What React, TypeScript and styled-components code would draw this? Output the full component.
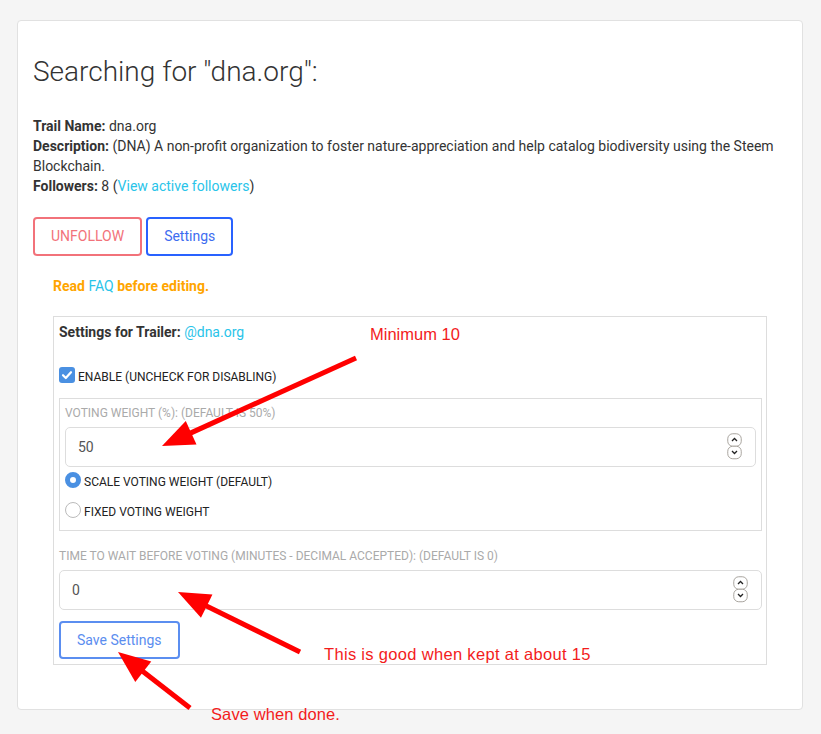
import React from 'react';
import styled, { createGlobalStyle } from 'styled-components';

const Global = createGlobalStyle`
  html, body { margin: 0; padding: 0; background: #f5f5f5; }
  body {
    font-family: Roboto, "Liberation Sans", Arial, sans-serif;
    color: #333;
    width: 821px;
    height: 734px;
    overflow: hidden;
  }
  * { box-sizing: border-box; }
`;

const Page = styled.div`
  position: relative;
  width: 821px;
  height: 734px;
  padding: 20px 18px 0 17px;
`;

const Card = styled.div`
  background: #fff;
  border: 1px solid #e1e1e1;
  border-radius: 4px;
  height: 690px;
  padding: 0 15px;
`;

const Title = styled.h3`
  margin: 34px 0 27px;
  font-size: 28px;
  line-height: 33.6px;
  font-weight: 300;
  color: #333;
`;

const Info = styled.div`
  font-size: 14px;
  line-height: 20px;
  color: #333;
`;

const Strong = styled.b`
  font-weight: 700;
`;

const Link = styled.a`
  color: #29c4e9;
  text-decoration: none;
  font-weight: 400;
`;

const ButtonRow = styled.div`
  margin-top: 21px;
  display: flex;
  gap: 4px;
`;

const OutlineButton = styled.button<{ $tone: 'danger' | 'primary' | 'soft' }>`
  height: ${(p) => (p.$tone === 'soft' ? 38 : 39)}px;
  padding: 0 16px;
  background: #fff;
  border: 2px solid
    ${(p) => (p.$tone === 'danger' ? '#f2727a' : p.$tone === 'primary' ? '#2962ff' : '#5b8ef0')};
  color: ${(p) => (p.$tone === 'danger' ? '#f2727a' : p.$tone === 'primary' ? '#3d6cf0' : '#5b8def')};
  border-radius: 4px;
  font-family: Roboto, "Liberation Sans", sans-serif;
  font-size: 14px;
  cursor: pointer;
`;

const Notice = styled.div`
  margin-top: 20px;
  padding-left: 20px;
  font-size: 14px;
  line-height: 20px;
  font-weight: 700;
  color: #ffa500;
`;

const SettingsBox = styled.div`
  margin: 20px 20px 0;
  border: 1px solid #ddd;
  padding: 5px 4px 5px 5px;
`;

const BoxHeading = styled.div`
  font-size: 14px;
  line-height: 20px;
`;

const CheckRow = styled.label`
  margin-top: 25px;
  display: flex;
  align-items: center;
  gap: 3px;
  height: 20px;
  font-size: 12px;
  color: #222;
`;

const CheckMark = styled.span`
  width: 16px;
  height: 16px;
  border-radius: 3px;
  background: #4a90e2;
  display: inline-flex;
  align-items: center;
  justify-content: center;
  margin-top: -4px;
`;

const Fieldset = styled.div`
  margin-top: 11px;
  border: 1px solid #ddd;
  padding: 5px 5px 6px 5px;
`;

const FieldLabel = styled.div<{ $gap?: number }>`
  font-size: 12px;
  line-height: 18px;
  color: #aaa;
  margin-top: ${(p) => p.$gap ?? 0}px;
`;

const InputBox = styled.div<{ $h: number }>`
  margin-top: 5px;
  height: ${(p) => p.$h}px;
  border: 1px solid #ddd;
  border-radius: 5px;
  display: flex;
  align-items: center;
  padding: 0 13px 0 12px;
`;

const NumberInput = styled.input`
  flex: 1;
  border: none;
  outline: none;
  font-family: Roboto, "Liberation Sans", sans-serif;
  font-size: 14px;
  color: #555;
  padding: 0;
  background: transparent;
`;

const RadioRow = styled.label<{ $first?: boolean }>`
  margin-top: ${(p) => (p.$first ? 3 : 6)}px;
  height: 24px;
  display: flex;
  align-items: center;
  gap: 3px;
  font-size: 12px;
  color: #222;
`;

const RadioDot = styled.span<{ $checked?: boolean }>`
  width: 16px;
  height: 16px;
  border-radius: 50%;
  margin-top: -4px;
  background: #fff;
  border: ${(p) => (p.$checked ? '5px solid #4a90e2' : '1px solid #bbb')};
`;

const SaveRow = styled.div`
  margin-top: 11px;
`;

const Overlay = styled.svg`
  position: absolute;
  left: 0;
  top: 0;
  pointer-events: none;
`;

const Note = styled.div<{ $x: number; $y: number; $spacing?: number }>`
  position: absolute;
  left: ${(p) => p.$x}px;
  top: ${(p) => p.$y}px;
  font-family: "Liberation Sans", Arial, sans-serif;
  font-size: 16.5px;
  line-height: 20px;
  letter-spacing: ${(p) => p.$spacing ?? 0}px;
  color: #f31c1c;
  white-space: nowrap;
`;

const Spinner = () => (
  <svg width="15" height="27" viewBox="0 0 15 27">
    <rect x="0.75" y="0.75" width="13.5" height="12.5" rx="5" fill="#fff" stroke="#a9a59f" strokeWidth="1" />
    <rect x="0.75" y="13.25" width="13.5" height="12.5" rx="5" fill="#fff" stroke="#a9a59f" strokeWidth="1" />
    <path d="M5 8 L7.5 5.5 L10 8" fill="none" stroke="#222" strokeWidth="1.3" />
    <path d="M5 18 L7.5 20.5 L10 18" fill="none" stroke="#222" strokeWidth="1.3" />
  </svg>
);

type ArrowProps = { x1: number; y1: number; x2: number; y2: number };
const Arrow = ({ x1, y1, x2, y2 }: ArrowProps) => {
  const dx = x2 - x1;
  const dy = y2 - y1;
  const len = Math.hypot(dx, dy);
  const ux = dx / len;
  const uy = dy / len;
  const hl = 32;
  const hw = 13;
  const bx = x2 - ux * hl;
  const by = y2 - uy * hl;
  const px = -uy;
  const py = ux;
  const pts = `${x2},${y2} ${bx + px * hw},${by + py * hw} ${bx - px * hw},${by - py * hw}`;
  return (
    <g>
      <line x1={x1} y1={y1} x2={bx + ux * 2} y2={by + uy * 2} stroke="#ff0000" strokeWidth="5" />
      <polygon points={pts} fill="#ff0000" />
    </g>
  );
};

export default function App() {
  return (
    <Page>
      <Global />
      <Card>
        <Title>Searching for "dna.org":</Title>
        <Info>
          <Strong>Trail Name:</Strong> dna.org
          <br />
          <Strong>Description:</Strong> (DNA) A non-profit organization to foster nature-appreciation and help catalog
          biodiversity using the Steem Blockchain.
          <br />
          <Strong>Followers:</Strong> 8 (<Link href="#">View active followers</Link>)
        </Info>
        <ButtonRow>
          <OutlineButton $tone="danger">UNFOLLOW</OutlineButton>
          <OutlineButton $tone="primary">Settings</OutlineButton>
        </ButtonRow>
        <Notice>
          Read <Link href="#">FAQ</Link> before editing.
        </Notice>
        <SettingsBox>
          <BoxHeading>
            <Strong>Settings for Trailer:</Strong> <Link href="#">@dna.org</Link>
          </BoxHeading>
          <CheckRow>
            <CheckMark>
              <svg width="12" height="12" viewBox="0 0 12 12">
                <path d="M2 6.2 L4.8 9 L10 3.2" fill="none" stroke="#fff" strokeWidth="2.2" strokeLinecap="round" strokeLinejoin="round" />
              </svg>
            </CheckMark>
            ENABLE (UNCHECK FOR DISABLING)
          </CheckRow>
          <Fieldset>
            <FieldLabel>VOTING WEIGHT (%): (DEFAULT IS 50%)</FieldLabel>
            <InputBox $h={40}>
              <NumberInput defaultValue="50" />
              <Spinner />
            </InputBox>
            <RadioRow $first>
              <RadioDot $checked />
              SCALE VOTING WEIGHT (DEFAULT)
            </RadioRow>
            <RadioRow>
              <RadioDot />
              FIXED VOTING WEIGHT
            </RadioRow>
          </Fieldset>
          <FieldLabel $gap={16}>TIME TO WAIT BEFORE VOTING (MINUTES - DECIMAL ACCEPTED): (DEFAULT IS 0)</FieldLabel>
          <InputBox $h={40}>
            <NumberInput defaultValue="0" />
            <Spinner />
          </InputBox>
          <SaveRow>
            <OutlineButton $tone="soft">Save Settings</OutlineButton>
          </SaveRow>
        </SettingsBox>
      </Card>
      <Overlay width="821" height="734" viewBox="0 0 821 734">
        <Arrow x1={356} y1={358} x2={162} y2={446} />
        <Arrow x1={300} y1={652} x2={178} y2={592} />
        <Arrow x1={190} y1={708} x2={118} y2={652} />
      </Overlay>
      <Note $x={370} $y={324}>Minimum 10</Note>
      <Note $x={324} $y={644} $spacing={0.32}>
        This is good when kept at about 15
      </Note>
      <Note $x={211} $y={704} $spacing={0.1}>
        Save when done.
      </Note>
    </Page>
  );
}
